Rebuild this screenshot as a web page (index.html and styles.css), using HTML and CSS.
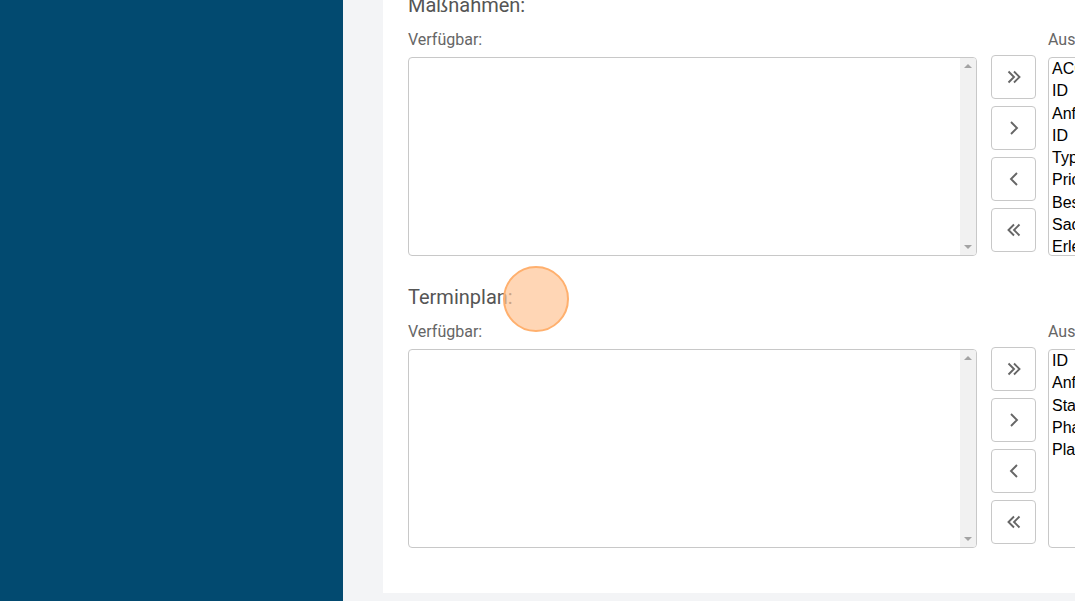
FILE: index.html
```html
<!DOCTYPE html>
<html lang="de">
<head>
<meta charset="utf-8">
<title>Spalten</title>
<link rel="stylesheet" href="styles.css">
</head>
<body>
<div class="app">
  <aside class="sidebar"></aside>
  <main class="content">
    <div class="panel">
      <section class="section">
        <h3 class="heading">Maßnahmen:</h3>
        <div class="picker">
          <div class="col">
            <div class="label">Verfügbar:</div>
            <div class="box">
              <div class="box-list"></div>
              <div class="scrollbar"><span class="arr up"></span><span class="arr down"></span></div>
            </div>
          </div>
          <div class="btns">
            <button class="btn"><svg width="16" height="16" viewBox="0 0 16 16"><path d="M2.5 2.5l5.5 5.5-5.5 5.5M8 2.5l5.5 5.5L8 13.5" fill="none" stroke="#666" stroke-width="1.9"/></svg></button>
            <button class="btn"><svg width="16" height="16" viewBox="0 0 16 16"><path d="M5 2l6 6-6 6" fill="none" stroke="#666" stroke-width="1.9"/></svg></button>
            <button class="btn"><svg width="16" height="16" viewBox="0 0 16 16"><path d="M11 2L5 8l6 6" fill="none" stroke="#666" stroke-width="1.9"/></svg></button>
            <button class="btn"><svg width="16" height="16" viewBox="0 0 16 16"><path d="M13.5 2.5L8 8l5.5 5.5M8 2.5L2.5 8 8 13.5" fill="none" stroke="#666" stroke-width="1.9"/></svg></button>
          </div>
          <div class="col">
            <div class="label">Ausgewählt:</div>
            <div class="box">
              <ul class="box-list items">
                <li>ACC-Nummer</li>
                <li>ID</li>
                <li>Anforderung</li>
                <li>ID</li>
                <li>Typ</li>
                <li>Priorität</li>
                <li>Beschreibung</li>
                <li>Sachbearbeiter</li>
                <li>Erledigt bis</li>
              </ul>
            </div>
          </div>
        </div>
      </section>
      <section class="section">
        <h3 class="heading">Terminplan:</h3>
        <div class="picker">
          <div class="col">
            <div class="label">Verfügbar:</div>
            <div class="box">
              <div class="box-list"></div>
              <div class="scrollbar"><span class="arr up"></span><span class="arr down"></span></div>
            </div>
          </div>
          <div class="btns">
            <button class="btn"><svg width="16" height="16" viewBox="0 0 16 16"><path d="M2.5 2.5l5.5 5.5-5.5 5.5M8 2.5l5.5 5.5L8 13.5" fill="none" stroke="#666" stroke-width="1.9"/></svg></button>
            <button class="btn"><svg width="16" height="16" viewBox="0 0 16 16"><path d="M5 2l6 6-6 6" fill="none" stroke="#666" stroke-width="1.9"/></svg></button>
            <button class="btn"><svg width="16" height="16" viewBox="0 0 16 16"><path d="M11 2L5 8l6 6" fill="none" stroke="#666" stroke-width="1.9"/></svg></button>
            <button class="btn"><svg width="16" height="16" viewBox="0 0 16 16"><path d="M13.5 2.5L8 8l5.5 5.5M8 2.5L2.5 8 8 13.5" fill="none" stroke="#666" stroke-width="1.9"/></svg></button>
          </div>
          <div class="col">
            <div class="label">Ausgewählt:</div>
            <div class="box">
              <ul class="box-list items">
                <li>ID</li>
                <li>Anforderung</li>
                <li>Status</li>
                <li>Phase</li>
                <li>Plan-Termin</li>
              </ul>
            </div>
          </div>
        </div>
      </section>
    </div>
  </main>
</div>
<div class="cursor"></div>
</body>
</html>
```

FILE: styles.css
```css
html, body {
  margin: 0;
  padding: 0;
  width: 1075px;
  height: 601px;
  overflow: hidden;
  font-family: Roboto, "Liberation Sans", sans-serif;
}
.app {
  display: flex;
  height: 601px;
}
.sidebar {
  flex: 0 0 343px;
  background: #024a70;
}
.content {
  flex: 1;
  background: #f3f4f6;
  padding-left: 40px;
  padding-bottom: 8px;
  overflow: hidden;
  display: flex;
  flex-direction: column;
}
.panel {
  background: #fff;
  margin-top: -32px;
  padding: 25px 0 0 25px;
  width: 1300px;
  flex: 1;
}
.section {
  margin-bottom: 29px;
}
.heading {
  margin: 0 0 11px 0;
  font-weight: normal;
  font-size: 20px;
  line-height: 24px;
  color: #555;
}
.picker {
  display: grid;
  grid-template-columns: 569px 45px 569px;
  column-gap: 14px;
}
.picker .col:last-child {
  margin-left: -2px;
}
.label {
  font-size: 16px;
  line-height: 20px;
  color: #666;
  margin: 2px 0 7px 0;
}
.box {
  height: 199px;
  box-sizing: border-box;
  border: 1px solid #c8c8c8;
  border-radius: 4px;
  display: flex;
  overflow: hidden;
  background: #fff;
}
.box-list {
  flex: 1;
  margin: 0;
  padding: 0 3px;
  list-style: none;
}
.items li {
  font-family: "Liberation Sans", Arial, sans-serif;
  font-size: 16px;
  line-height: 22.3px;
  color: #000;
  white-space: nowrap;
}
.scrollbar {
  flex: 0 0 16px;
  background: #f1f1f1;
  display: flex;
  flex-direction: column;
  justify-content: space-between;
  align-items: center;
  padding: 6px 0;
}
.arr {
  width: 0;
  height: 0;
  border-left: 4px solid transparent;
  border-right: 4px solid transparent;
}
.arr.up { border-bottom: 4px solid #a3a3a3; }
.arr.down { border-top: 4px solid #a3a3a3; }
.btns {
  display: flex;
  flex-direction: column;
  gap: 7px;
  padding-top: 27px;
}
.btn {
  width: 45px;
  height: 44px;
  box-sizing: border-box;
  border: 1px solid #c8c8c8;
  border-radius: 4px;
  background: #fff;
  padding: 0;
  display: flex;
  align-items: center;
  justify-content: center;
}
.cursor {
  position: absolute;
  left: 503px;
  top: 266px;
  width: 66px;
  height: 66px;
  box-sizing: border-box;
  border-radius: 50%;
  background: rgba(255, 196, 150, 0.7);
  border: 2px solid #ffb06e;
}
```
